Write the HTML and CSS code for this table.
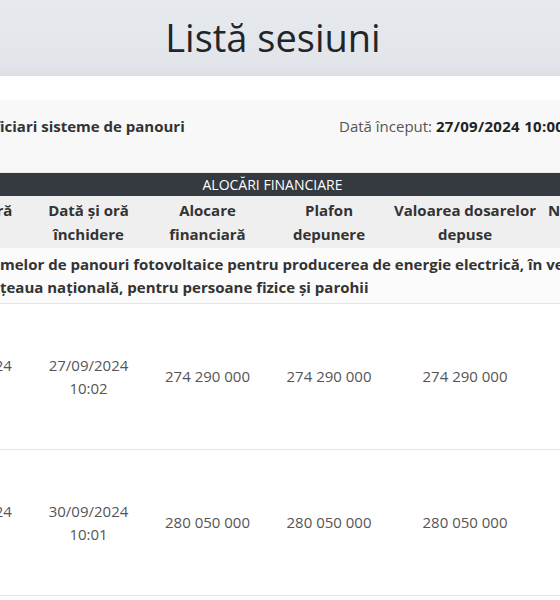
FILE: index.html
```html
<!DOCTYPE html>
<html lang="ro">
<head>
<meta charset="utf-8">
<title>Listă sesiuni</title>
<link rel="stylesheet" href="styles.css">
</head>
<body>
<div class="page">
  <header class="topbar">
    <h1 class="title">Listă sesiuni</h1>
  </header>

  <section class="card">
    <div class="card-head">
      <div class="prog"><span class="cut"><span>Program de finanțare beneficiari: Benef</span></span>iciari sisteme de panouri</div>
      <div class="start">Dată început: <b>27/09/2024 10:00</b></div>
    </div>

    <div class="bar">ALOCĂRI FINANCIARE</div>

    <div class="row head">
      <div class="cell">Dată și oră<br>start</div>
      <div class="cell">Dată și oră<br>închidere</div>
      <div class="cell">Alocare<br>financiară</div>
      <div class="cell">Plafon<br>depunere</div>
      <div class="cell">Valoarea dosarelor<br>depuse</div>
      <div class="cell">Număr de<br>dosare</div>
    </div>

    <div class="desc">
      <div class="line"><span class="cut"><span>Program privind instalarea siste</span></span>melor de panouri fotovoltaice pentru producerea de energie electrică, în vederea acoperirii consumului propriu și livrării surplusului în re</div>
      <div class="line"><span class="cut"><span>surplusului în re</span></span>ţeaua naţională, pentru persoane fizice și parohii</div>
    </div>

    <div class="row data">
      <div class="cell">27/09/2024<br>10:00</div>
      <div class="cell">27/09/2024<br>10:02</div>
      <div class="cell">274 290 000</div>
      <div class="cell">274 290 000</div>
      <div class="cell">274 290 000</div>
      <div class="cell">2 891</div>
    </div>

    <div class="row data">
      <div class="cell">30/09/2024<br>10:00</div>
      <div class="cell">30/09/2024<br>10:01</div>
      <div class="cell">280 050 000</div>
      <div class="cell">280 050 000</div>
      <div class="cell">280 050 000</div>
      <div class="cell">2 954</div>
    </div>
  </section>
</div>
</body>
</html>
```

FILE: styles.css
```css
html, body {
  margin: 0;
  padding: 0;
  overflow: hidden;
  background: #ffffff;
}

.page {
  width: 560px;
  height: 600px;
  overflow: hidden;
  font-family: "Open Sans", "Noto Sans", sans-serif;
  color: #333333;
}

.topbar {
  height: 76px;
  background: linear-gradient(#e6e9ed, #e2e5e9 80%, #dcdfe3);
  display: flex;
  align-items: center;
  justify-content: center;
  padding-right: 14px;
}

.title {
  margin: 0;
  font-size: 38px;
  font-weight: 500;
  color: #212529;
  line-height: 1;
  padding-bottom: 2px;
}

.card {
  margin-top: 24px;
  margin-left: -86px;
  width: 717px;
  background: #f8f8f8;
}

.cut {
  display: inline-flex;
  width: 0;
  justify-content: flex-end;
  white-space: nowrap;
}

.card-head {
  height: 72px;
  box-sizing: border-box;
  padding: 15px 0 0 86px;
  display: flex;
  font-size: 15px;
  line-height: 22px;
  white-space: nowrap;
}

.prog {
  flex: 0 0 339px;
  font-weight: 700;
  color: #333333;
}

.start {
  color: #555555;
}

.start b {
  color: #222222;
  font-weight: 700;
  letter-spacing: 0.3px;
}

.bar {
  height: 23px;
  background: #343a40;
  color: #ffffff;
  font-size: 14px;
  line-height: 23px;
  text-align: center;
  border-top: 1px solid #e9e9e9;
}

.row {
  display: grid;
  grid-template-columns: 116px 117px 121px 122px 150px 91px;
  text-align: center;
}

.head {
  background: #efefef;
  font-weight: 700;
  font-size: 15px;
  line-height: 24px;
  padding: 2px 0 2px;
  color: #333333;
}

.head .cell {
  white-space: nowrap;
}

.desc {
  background: #fbfbfb;
  padding: 5px 0 4px 86px;
  font-weight: 700;
  font-size: 15px;
  line-height: 23px;
  white-space: nowrap;
  color: #333333;
  border-bottom: 1px solid #e6e6e6;
}

.data {
  height: 146px;
  box-sizing: border-box;
  background: #ffffff;
  align-items: center;
  font-size: 15px;
  line-height: 23px;
  color: #555555;
  border-bottom: 1px solid #e6e6e6;
}
```
